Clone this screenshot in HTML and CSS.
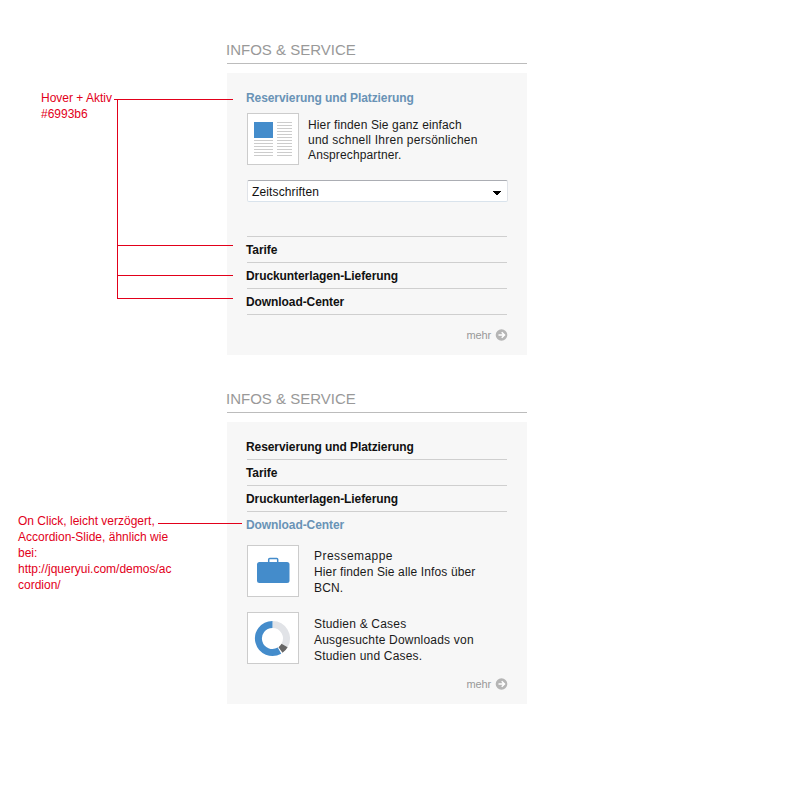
FILE: index.html
```html
<!DOCTYPE html>
<html lang="de">
<head>
<meta charset="utf-8">
<title>Infos &amp; Service</title>
<link rel="stylesheet" href="styles.css">
</head>
<body>
<svg class="leaders" width="800" height="800" viewBox="0 0 800 800" aria-hidden="true">
  <path d="M114 99.5H233M117.500 99V299M117 245.500H233M117 275.500H233M117 298.500H233M158 523.500H242"/>
</svg>
<main class="page">
  <section class="row">
    <aside class="note note-hover">Hover + Aktiv<br>#6993b6</aside>
    <div class="widget">
      <h2>INFOS &amp; SERVICE</h2>
      <div class="panel">
        <h3 class="active">Reservierung und Platzierung</h3>
        <div class="teaser intro">
          <svg class="thumb" viewBox="0 0 52 52">
            <rect class="frame" x=".5" y=".5" width="51" height="51"/>
            <rect class="blue" x="7" y="9" width="19" height="16"/>
            <path class="rules" d="M30 9.500h15M30 12.500h15M30 15.500h15M30 18.500h15M30 21.500h15M30 24.500h15M30 27.500h15M30 30.500h15M30 33.500h15M30 36.500h15M30 39.500h15M30 42.500h15M7 27.500h19M7 30.500h19M7 33.500h19M7 36.500h19M7 39.500h19M7 42.500h19"/>
          </svg>
          <p><span class="snug">Hier finden Sie ganz einfach</span><br><span class="loose">und schnell Ihren persönlichen</span><br><span class="snug">Ansprechpartner.</span></p>
        </div>
        <div class="select"><span>Zeitschriften</span><svg width="8" height="4" viewBox="0 0 8 4" shape-rendering="crispEdges"><path d="M0 0h8v1H7v1H6v1H5v1H3V3H2V2H1V1H0z"/></svg></div>
        <div class="list">
          <h3 class="item">Tarife</h3>
          <h3 class="item">Druckunterlagen-Lieferung</h3>
          <h3 class="item">Download-Center</h3>
        </div>
        <div class="more"><span>mehr</span><svg width="12" height="12" viewBox="0 0 12 12"><circle cx="5.500" cy="6" r="5.800"/><path d="M2.500 6H8.500M5.700 3.200 8.500 6 5.700 8.800"/></svg></div>
      </div>
    </div>
  </section>
  <section class="row">
    <aside class="note note-click">On Click, leicht verzögert,<br>Accordion-Slide, ähnlich wie<br>bei:<br>http://jqueryui.com/demos/ac<br>cordion/</aside>
    <div class="widget">
      <h2>INFOS &amp; SERVICE</h2>
      <div class="panel lower">
        <h3 class="item">Reservierung und Platzierung</h3>
        <h3 class="item">Tarife</h3>
        <h3 class="item">Druckunterlagen-Lieferung</h3>
        <h3 class="active">Download-Center</h3>
        <div class="teaser download">
          <svg class="thumb" viewBox="0 0 52 52">
            <rect class="frame" x=".5" y=".5" width="51" height="51"/>
            <rect class="blue" x="10" y="17" width="32.500" height="21" rx="2.500"/>
            <path class="handle" d="M21.700 17v-2.500q0-1 1-1h7q1 0 1 1V17"/>
          </svg>
          <p><span class="wide">Pressemappe</span><br><span class="snug">Hier finden Sie alle Infos über</span><br><span class="snug">BCN.</span></p>
        </div>
        <div class="teaser download studies">
          <svg class="thumb" viewBox="0 0 52 52">
            <rect class="frame" x=".5" y=".5" width="51" height="51"/>
            <g class="ring">
              <path stroke="#e1e3e7" d="M25.500 12.500A14 14 0 0 1 37.600 33.500"/>
              <path stroke="#666" d="M37.600 33.500A14 14 0 0 1 33.500 38"/>
              <path stroke="#448ccb" d="M32.500 38.600A14 14 0 1 1 25.500 12.500"/>
            </g>
          </svg>
          <p>Studien &amp; Cases<br>Ausgesuchte Downloads von<br>Studien und Cases.</p>
        </div>
        <div class="more"><span>mehr</span><svg width="12" height="12" viewBox="0 0 12 12"><circle cx="5.500" cy="6" r="5.800"/><path d="M2.500 6H8.500M5.700 3.200 8.500 6 5.700 8.800"/></svg></div>
      </div>
    </div>
  </section>
</main>
</body>
</html>
```
FILE: styles.css
```css
* { box-sizing: border-box; }
body { margin: 0; background: #fff; color: #1a1a1a; font: 12px/16px "Liberation Sans", Arial, sans-serif; }
h2, h3, p { margin: 0; }
svg { display: block; flex: none; overflow: visible; }
.leaders { position: absolute; inset: 0; fill: none; stroke: #e2001a; pointer-events: none; }
.page { width: 800px; height: 800px; padding-top: 36px; overflow: hidden; }
.row { display: flex; height: 349px; }
.note { width: 227px; flex: none; color: #e2001a; white-space: nowrap; }
.note-hover { padding: 54px 0 0 41px; }
.note-click { padding: 128px 0 0 18px; }
.widget { width: 300px; }
h2 { height: 28px; margin-bottom: 9px; border-bottom: 1px solid #bcbcbc; color: #999; font-size: 15px; font-weight: 400; line-height: 27px; text-indent: -1px; white-space: nowrap; }
.panel { height: 282px; padding: 12px 19px 0 20px; background: #f7f7f7; }
h3 { height: 25px; font-size: 12px; line-height: 27px; color: #111; text-indent: -1px; white-space: nowrap; letter-spacing: -.08px; }
.active { color: #6993b6; }
.item { height: 26px; border-bottom: 1px solid #cfcfcf; width: 260px; }
.teaser { display: flex; white-space: nowrap; letter-spacing: .2px; }
.snug { letter-spacing: .13px; }
.loose { letter-spacing: .23px; }
.wide { letter-spacing: .45px; }
.thumb { width: 52px; height: 52px; }
.frame { fill: #fff; stroke: #ccc; }
.blue { fill: #448ccb; }
.rules { stroke: #ccc; fill: none; }
.handle { stroke: #448ccb; fill: none; stroke-width: 1.5; }
.ring { fill: none; stroke-width: 7; }
.intro { height: 52px; margin-top: 3px; gap: 9px; line-height: 15px; }
.intro p { padding-top: 5px; }
.select { display: flex; align-items: center; justify-content: space-between; width: 261px; height: 22px; margin-top: 15px; padding: 0 6px 0 4px; color: #111; background: #fff; border: 1px solid #e0e3e8; border-top-color: #abadb3; border-radius: 2px; border-bottom-color: #d9e3ec; letter-spacing: .13px; }
.select span { padding-top: 2px; }
.select svg { margin-top: 3px; fill: #000; }
.list { width: 260px; margin-top: 34px; border-top: 1px solid #cfcfcf; }
.more { display: flex; align-items: center; justify-content: flex-end; gap: 5px; height: 16px; margin-top: 12px; color: #999; font-size: 11px; letter-spacing: -.15px; }
.more circle { fill: #b5b5b5; }
.more path { fill: none; stroke: #fff; stroke-width: 1.5; }
.lower .active { height: 33px; }
.download { height: 52px; gap: 15px; margin-bottom: 15px; }
.download p { padding-top: 3px; }
.studies p { padding-top: 4px; }
.lower .more { margin-top: -3px; }
```
